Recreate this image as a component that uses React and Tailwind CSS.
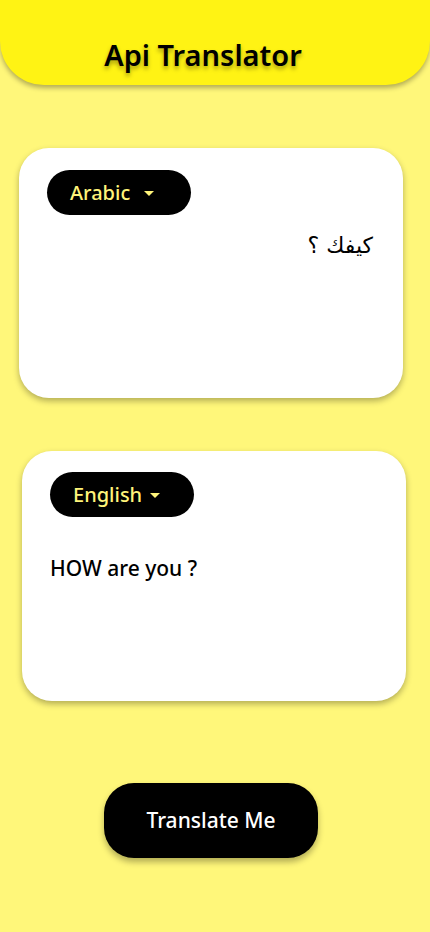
import { useState } from "react";

function LangPill({ label, gap }) {
  return (
    <button
      type="button"
      className={`flex h-[45px] w-[144px] items-center rounded-full bg-black pl-[23px] text-[20px] font-medium text-[#fff47a] ${gap}`}
    >
      {label}
      <span className="mt-[2px] h-0 w-0 border-x-[5px] border-t-[5px] border-x-transparent border-t-[#fff47a]" />
    </button>
  );
}

export default function App() {
  const [source] = useState("كيفك ؟");
  const [result] = useState("HOW are you ?");

  return (
    <main
      className="min-h-[932px] bg-[#fff77a] pb-[72px]"
      style={{ fontFamily: "'Noto Sans', sans-serif" }}
    >
      <header className="flex h-[85px] items-end justify-center rounded-b-[44px] bg-[#fff314] pb-[9px] pr-[24px] shadow-[0_3px_5px_rgba(0,0,0,0.3)]">
        <h1 className="text-[29px] font-semibold text-black [text-shadow:0_3px_4px_rgba(0,0,0,0.35)]">
          Api Translator
        </h1>
      </header>

      <section className="mx-[19px] mt-[63px] h-[250px] w-[384px] rounded-[30px] bg-white px-[28px] pt-[22px] shadow-[0_3px_6px_rgba(0,0,0,0.3)]">
        <LangPill label="Arabic" gap="gap-[14px]" />
        <p dir="rtl" className="mt-[14px] pr-[2px] text-[22px] text-black" style={{ fontFamily: "'DejaVu Sans', sans-serif" }}>
          {source}
        </p>
      </section>

      <section className="ml-[22px] mt-[53px] h-[250px] w-[384px] rounded-[30px] bg-white px-[28px] pt-[21px] shadow-[0_3px_6px_rgba(0,0,0,0.3)]">
        <LangPill label="English" gap="gap-[8px]" />
        <p className="mt-[36px] text-[21px] font-medium text-black">{result}</p>
      </section>

      <div className="mt-[82px] flex justify-center pr-[8px]">
        <button
          type="button"
          className="h-[75px] w-[214px] rounded-[30px] bg-black text-[21px] font-medium text-white shadow-[0_4px_6px_rgba(0,0,0,0.3)]"
        >
          Translate Me
        </button>
      </div>
    </main>
  );
}
